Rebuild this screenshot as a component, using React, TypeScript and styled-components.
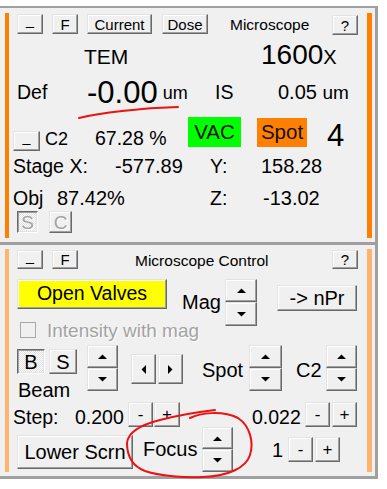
import React from 'react';
import styled, { createGlobalStyle, css } from 'styled-components';

const Global = createGlobalStyle`
  html, body { margin: 0; padding: 0; background: #ffffff; }
  body { font-family: "Liberation Sans", Arial, sans-serif; color: #000; }
  #root { width: 387px; }
`;

const Page = styled.div`
  position: relative;
  width: 387px;
  height: 489px;
  overflow: hidden;
`;

const Frame = styled.div`
  margin-top: 6px;
  width: 375px;
  background: #f0f0f0;
  border-top: 2px solid #a0a0a0;
  border-right: 3px solid #a0a0a0;
  border-bottom: 3px solid #a0a0a0;
`;

const Panel = styled.section<{ $pt: number; $pb: number; $sep?: boolean }>`
  padding: ${p => p.$pt}px 3px ${p => p.$pb}px 5px;
  ${p => p.$sep && css`border-top: 3px solid #a0a0a0;`}
`;

const Inner = styled.div<{ $accent: string; $pb?: number }>`
  display: flex;
  flex-direction: column;
  border-left: 4px solid ${p => p.$accent};
  border-right: 5px solid ${p => p.$accent};
  padding-bottom: ${p => p.$pb ?? 0}px;
`;

const Row = styled.div<{ $mt?: number; $h?: number; $pl?: number; $align?: string }>`
  display: flex;
  align-items: ${p => p.$align ?? 'flex-start'};
  margin-top: ${p => p.$mt ?? 0}px;
  height: ${p => (p.$h ? `${p.$h}px` : 'auto')};
  padding-left: ${p => p.$pl ?? 0}px;
`;

const Cell = styled.div<{ $w?: number; $fs: number; $mt?: number; $ml?: number; $dim?: boolean }>`
  flex: none;
  width: ${p => (p.$w ? `${p.$w}px` : 'auto')};
  margin-top: ${p => p.$mt ?? 0}px;
  margin-left: ${p => p.$ml ?? 0}px;
  font-size: ${p => p.$fs}px;
  line-height: 1;
  white-space: nowrap;
  color: ${p => (p.$dim ? '#a3a3a3' : '#000')};
  ${p => p.$dim && css`text-shadow: 1px 1px 0 #ffffff;`}
`;

const Span = styled.span<{ $fs: number; $va?: number }>`
  font-size: ${p => p.$fs}px;
  vertical-align: ${p => p.$va ?? 0}px;
`;

const Title = styled.div<{ $ml: number; $mt: number }>`
  flex: none;
  margin-left: ${p => p.$ml}px;
  margin-top: ${p => p.$mt}px;
  font-size: 15.5px;
  line-height: 1;
  white-space: nowrap;
`;

const raised = css`
  border: 1px solid;
  border-color: #e3e3e3 #696969 #696969 #e3e3e3;
  box-shadow: inset -1px -1px 0 #a0a0a0, inset 1px 1px 0 #ffffff;
`;

const sunken = css`
  border: 1px solid;
  border-color: #696969 #ffffff #ffffff #696969;
  box-shadow: inset 1px 1px 0 #a0a0a0, inset -1px -1px 0 #e3e3e3;
  background-color: #ffffff;
  background-image: conic-gradient(#ffffff 25%, #e0e0e0 0 50%, #ffffff 0 75%, #e0e0e0 0);
  background-size: 2px 2px;
`;

const Btn = styled.button<{
  $w: number; $h: number; $fs?: number; $ml?: number; $mt?: number; $mr?: number;
  $auto?: boolean; $bg?: string; $pressed?: boolean; $dim?: boolean; $pt?: number;
}>`
  box-sizing: border-box;
  flex: none;
  width: ${p => p.$w}px;
  height: ${p => p.$h}px;
  margin: ${p => p.$mt ?? 0}px ${p => p.$mr ?? 0}px 0 ${p => (p.$auto ? 'auto' : `${p.$ml ?? 0}px`)};
  padding: ${p => p.$pt ?? 0}px 0 0 0;
  font-family: inherit;
  font-size: ${p => p.$fs ?? 15}px;
  line-height: 1;
  white-space: nowrap;
  color: ${p => (p.$dim ? '#a3a3a3' : '#000')};
  ${p => p.$dim && css`text-shadow: 1px 1px 0 #ffffff;`}
  background: ${p => p.$bg ?? '#f0f0f0'};
  display: flex;
  align-items: center;
  justify-content: center;
  ${p => (p.$pressed ? sunken : raised)}
`;

const Badge = styled.div<{ $w: number; $h: number; $bg: string; $mt?: number; $ml?: number }>`
  flex: none;
  box-sizing: border-box;
  width: ${p => p.$w}px;
  height: ${p => p.$h}px;
  margin-top: ${p => p.$mt ?? 0}px;
  margin-left: ${p => p.$ml ?? 0}px;
  background: ${p => p.$bg};
  display: flex;
  align-items: center;
  justify-content: center;
  font-size: 20.5px;
  line-height: 1;
  color: #111;
`;

const SpinBox = styled.div<{ $w: number; $ml?: number; $mt?: number; $span?: boolean }>`
  flex: none;
  display: flex;
  flex-direction: column;
  width: ${p => p.$w}px;
  margin-left: ${p => p.$ml ?? 0}px;
  margin-top: ${p => p.$mt ?? 0}px;
  ${p => p.$span && css`grid-row: 1 / span 2;`}
`;

const Tri = ({ dir }: { dir: 'up' | 'down' | 'left' | 'right' }) => {
  const pts = {
    up: '0,5 9,5 4.5,0.5',
    down: '0,0 9,0 4.5,4.5',
    left: '5,0 5,9 0.5,4.5',
    right: '0,0 0,9 4.5,4.5',
  }[dir];
  const vertical = dir === 'up' || dir === 'down';
  return (
    <svg width={vertical ? 9 : 5} height={vertical ? 5 : 9} viewBox={vertical ? '0 0 9 5' : '0 0 5 9'}>
      <polygon points={pts} fill="#000" />
    </svg>
  );
};

const Spinner = ({ w, up, down, ml, mt, span }: { w: number; up: number; down: number; ml?: number; mt?: number; span?: boolean }) => (
  <SpinBox $w={w} $ml={ml} $mt={mt} $span={span}>
    <Btn $w={w} $h={up}><Tri dir="up" /></Btn>
    <Btn $w={w} $h={down}><Tri dir="down" /></Btn>
  </SpinBox>
);

const ControlGrid = styled.div`
  display: grid;
  grid-template-columns: 165px 43px 52px auto;
  grid-template-rows: 42px 18px;
  margin-top: 10px;
  padding-left: 8px;
`;

const GridItem = styled.div<{ $col: string; $row: string; $mt?: number }>`
  grid-column: ${p => p.$col};
  grid-row: ${p => p.$row};
  margin-top: ${p => p.$mt ?? 0}px;
  display: flex;
  align-items: center;
`;

const CheckBox = styled.div`
  box-sizing: border-box;
  flex: none;
  width: 16px;
  height: 16px;
  margin-left: 3px;
  border: 1px solid #a8a8a8;
  background: #f0f0f0;
`;

const Column = styled.div<{ $ml?: number; $mt?: number }>`
  display: flex;
  flex-direction: column;
  margin-left: ${p => p.$ml ?? 0}px;
  margin-top: ${p => p.$mt ?? 0}px;
`;

const Pair = styled.div`
  display: flex;
`;

const Overlay = styled.svg`
  position: absolute;
  left: 0;
  top: 0;
  pointer-events: none;
`;

export default function App() {
  return (
    <>
      <Global />
      <Page>
        <Frame>
          <Panel $pt={5} $pb={4}>
            <Inner $accent="#ff8000" $pb={5}>
              <Row $h={22} $pl={8}>
                <Btn $w={26} $h={20} $mt={1} $pt={3}>–</Btn>
                <Btn $w={26} $h={20} $mt={1} $ml={9}>F</Btn>
                <Btn $w={65} $h={20} $mt={1} $ml={9}>Current</Btn>
                <Btn $w={46} $h={20} $mt={1} $ml={10}>Dose</Btn>
                <Title $ml={22} $mt={4}>Microscope</Title>
                <Btn $w={26} $h={20} $mt={2} $auto $mr={9}>?</Btn>
              </Row>
              <Row $mt={6} $pl={75} $align="baseline">
                <Cell $w={177} $fs={21}>TEM</Cell>
                <Cell $fs={28}>1600<Span $fs={20}>X</Span></Cell>
              </Row>
              <Row $mt={8} $pl={8} $align="baseline">
                <Cell $w={70} $fs={19.5}>Def</Cell>
                <Cell $w={128} $fs={18}><Span $fs={31} $va={-4}>-0.00</Span> um</Cell>
                <Cell $w={63} $fs={19.5}>IS</Cell>
                <Cell $fs={20}>0.05 <Span $fs={19}>um</Span></Cell>
              </Row>
              <Row $mt={9} $h={34} $pl={4}>
                <Btn $w={27} $h={20} $mt={14} $pt={3}>–</Btn>
                <Cell $w={50} $fs={18} $ml={5} $mt={13}>C2</Cell>
                <Cell $w={93} $fs={19.5} $mt={12}>67.28 %</Cell>
                <Badge $w={53} $h={30} $bg="#00ff00">VAC</Badge>
                <Badge $w={50} $h={29} $mt={1} $ml={16} $bg="#ff8000">Spot</Badge>
                <Cell $fs={31} $ml={20} $mt={3}>4</Cell>
              </Row>
              <Row $mt={5} $pl={4} $align="baseline">
                <Cell $w={102} $fs={19.5}>Stage X:</Cell>
                <Cell $w={95} $fs={20}>-577.89</Cell>
                <Cell $w={51} $fs={19.5}>Y:</Cell>
                <Cell $fs={20}>158.28</Cell>
              </Row>
              <Row $mt={11} $pl={4} $align="baseline">
                <Cell $w={44} $fs={19.5}>Obj</Cell>
                <Cell $w={153} $fs={20}>87.42%</Cell>
                <Cell $w={53} $fs={19.5}>Z:</Cell>
                <Cell $fs={20}>-13.02</Cell>
              </Row>
              <Row $mt={3} $pl={8}>
                <Btn $w={21} $h={22} $fs={19} $pressed $dim>S</Btn>
                <Btn $w={23} $h={22} $fs={19} $ml={11} $dim>C</Btn>
              </Row>
            </Inner>
          </Panel>
          <Panel $pt={4} $pb={4} $sep>
            <Inner $accent="#ffb36e">
              <Row $h={20} $pl={8}>
                <Btn $w={26} $h={19} $mt={1} $pt={3}>–</Btn>
                <Btn $w={26} $h={19} $mt={1} $ml={9}>F</Btn>
                <Title $ml={57} $mt={4}>Microscope Control</Title>
                <Btn $w={26} $h={19} $mt={1} $auto $mr={9}>?</Btn>
              </Row>
              <ControlGrid>
                <GridItem $col="1" $row="1" style={{ alignItems: 'flex-start' }}>
                  <Btn $w={150} $h={30} $fs={19.5} $bg="#ffff00">Open Valves</Btn>
                </GridItem>
                <GridItem $col="2" $row="1" $mt={13} style={{ alignItems: 'flex-start' }}>
                  <Cell $fs={20}>Mag</Cell>
                </GridItem>
                <Spinner w={32} up={23} down={24} span />
                <GridItem $col="4" $row="1" style={{ alignItems: 'flex-start' }}>
                  <Btn $w={80} $h={26} $fs={20} $mt={6}>-&gt; nPr</Btn>
                </GridItem>
                <GridItem $col="1 / span 2" $row="2">
                  <CheckBox />
                  <Cell $fs={19} $ml={11} $dim>Intensity with mag</Cell>
                </GridItem>
              </ControlGrid>
              <Row $mt={6} $pl={8}>
                <Column $mt={4}>
                  <Pair>
                    <Btn $w={28} $h={25} $fs={20} $pressed>B</Btn>
                    <Btn $w={28} $h={25} $fs={20} $ml={4}>S</Btn>
                  </Pair>
                  <Cell $fs={20} $mt={6} $ml={1}>Beam</Cell>
                </Column>
                <Spinner w={31} up={23} down={23} ml={10} />
                <Btn $w={25} $h={30} $ml={13} $mt={9}><Tri dir="left" /></Btn>
                <Btn $w={25} $h={30} $ml={2} $mt={9}><Tri dir="right" /></Btn>
                <Cell $w={47} $fs={20} $ml={19} $mt={15}>Spot</Cell>
                <Spinner w={33} up={23} down={23} />
                <Cell $w={30} $fs={20} $ml={14} $mt={15}>C2</Cell>
                <Spinner w={31} up={23} down={23} />
              </Row>
              <Row $mt={2} $h={25} $pl={4}>
                <Cell $w={62} $fs={19.5} $mt={6}>Step:</Cell>
                <Cell $w={53} $fs={19.5} $mt={6}>0.200</Cell>
                <Btn $w={25} $h={25} $fs={17}>-</Btn>
                <Btn $w={26} $h={25} $fs={17} $ml={1}>+</Btn>
                <Cell $w={53} $fs={19.5} $ml={72} $mt={6}>0.022</Cell>
                <Btn $w={25} $h={25} $fs={17}>-</Btn>
                <Btn $w={25} $h={25} $fs={17} $ml={2}>+</Btn>
              </Row>
              <Row $pl={8} $h={45}>
                <Btn $w={116} $h={34} $fs={20} $mt={8}>Lower Scrn</Btn>
                <Cell $w={59} $fs={20} $ml={10} $mt={12}>Focus</Cell>
                <Spinner w={31} up={22} down={23} />
                <Cell $w={16} $fs={20} $ml={39} $mt={13}>1</Cell>
                <Btn $w={25} $h={25} $fs={17} $mt={10}>-</Btn>
                <Btn $w={25} $h={25} $fs={17} $ml={2} $mt={10}>+</Btn>
              </Row>
            </Inner>
          </Panel>
        </Frame>
        <Overlay width={387} height={489} viewBox="0 0 387 489">
          <path d="M79 118 C 100 113, 140 108, 178 107" fill="none" stroke="#ee1111" strokeWidth={2} strokeLinecap="round" />
          <path
            d="M190 418 C 200 413, 222 410, 238 418 C 250 426, 254 442, 250 455 C 246 468, 228 476, 203 477 C 185 478, 160 476, 145 471 C 132 466, 127 455, 127 443 C 128 432, 140 425, 160 420 C 175 416, 190 413, 215 410"
            fill="none" stroke="#ee1111" strokeWidth={2} strokeLinecap="round"
          />
        </Overlay>
      </Page>
    </>
  );
}
